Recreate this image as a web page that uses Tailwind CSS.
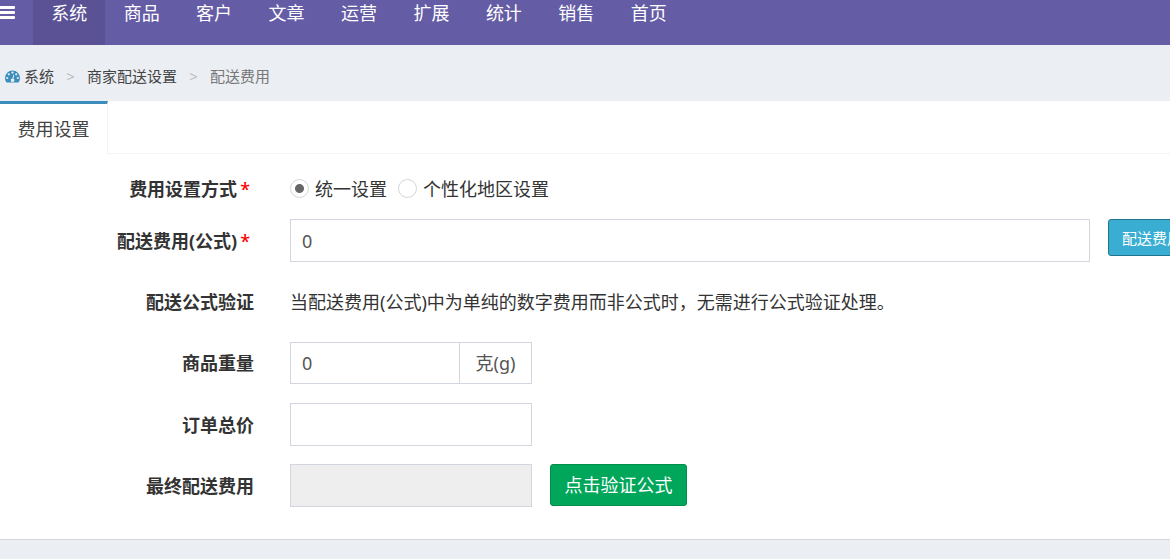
<!DOCTYPE html>
<html lang="zh-CN">
<head>
<meta charset="utf-8">
<meta name="viewport" content="width=device-width, initial-scale=1">
<title>配送费用</title>
<script src="https://cdn.jsdelivr.net/npm/@tailwindcss/browser@4"></script>
</head>
<body class="min-h-screen overflow-x-hidden bg-[#ebeef3] font-['Noto_Sans','Noto_Sans_CJK_SC',sans-serif] text-lg leading-6 text-[#333]">
<header class="flex h-[45px] items-stretch bg-[#655ca6] text-white">
  <button type="button" aria-label="菜单" class="flex w-[33px] shrink-0 items-start pt-1.5">
    <svg class="h-[13px] w-[15px]" viewBox="0 0 15 13" fill="currentColor" aria-hidden="true"><path d="M0 0h14q1 0 1 1v1q0 1-1 1H0zM0 5h14q1 0 1 1v1q0 1-1 1H0zM0 10h14q1 0 1 1v1q0 1-1 1H0z"/></svg>
  </button>
  <nav class="grid w-[652px] grid-cols-9 text-center">
    <a href="#" class="bg-[#5a5295] pt-px">系统</a>
    <a href="#" class="pt-px">商品</a>
    <a href="#" class="pt-px">客户</a>
    <a href="#" class="pt-px">文章</a>
    <a href="#" class="pt-px">运营</a>
    <a href="#" class="pt-px">扩展</a>
    <a href="#" class="pt-px">统计</a>
    <a href="#" class="pt-px">销售</a>
    <a href="#" class="pt-px">首页</a>
  </nav>
</header>

<nav aria-label="位置" class="flex h-14 items-center pt-1.5 pl-[5px] text-[15px] text-[#444]">
  <a href="#" class="flex items-center gap-1">
    <svg class="h-[13px] w-[15px]" viewBox="0 0 15 13" aria-hidden="true">
      <path fill="#3c8dbc" d="M7.5 .5A7.5 7.5 0 0 0 0 8c0 1.500.4 2.800 1.100 4 .2.300.4.500.8.500h11.200c.4 0 .6-.2.8-.5.7-1.200 1.100-2.500 1.100-4A7.500 7.500 0 0 0 7.500.5z"/>
      <g fill="#ebeef3"><circle cx="2.200" cy="8" r="1.100"/><circle cx="3.800" cy="4.300" r="1.100"/><circle cx="7.500" cy="2.700" r="1.100"/><circle cx="11.200" cy="4.300" r="1.100"/><circle cx="12.800" cy="8" r="1.100"/><path d="M8.400 4.800l.9.300-.9 3.600a1.700 1.700 0 1 1-1-.2z"/></g>
    </svg>
    <span>系统</span>
  </a>
  <span class="w-[33px] text-center text-[#bbb]">&gt;</span>
  <a href="#">商家配送设置</a>
  <span class="w-[33px] text-center text-[#bbb]">&gt;</span>
  <span class="text-[#777]">配送费用</span>
</nav>

<main class="border-b border-[#d3d8de] bg-white">
  <div class="flex h-[53px] border-b border-[#f4f4f4]">
    <a href="#" class="-mb-px w-[108px] border-t-[3px] border-r border-t-[#3c8dbc] border-r-[#f4f4f4] bg-white pt-[13px] text-center text-[#444]">费用设置</a>
  </div>
  <form class="flex flex-col gap-[18px] pt-[22px] pb-8">
    <div class="flex h-[25px] items-center gap-9" role="radiogroup" aria-labelledby="mode">
      <div id="mode" class="w-[254px] shrink-0 pr-1 text-right font-bold">费用设置方式<span class="pl-[3px] font-medium text-[#f00]">*</span></div>
      <div class="flex items-center gap-[11px]">
        <label class="flex items-center gap-1.5"><input type="radio" name="mode" checked class="size-[19px] appearance-none rounded-full border border-[#d5d5d5] bg-white checked:bg-[radial-gradient(circle,#666_4px,#fff_5px)]">统一设置</label>
        <label class="flex items-center gap-1.5"><input type="radio" name="mode" class="size-[19px] appearance-none rounded-full border border-[#d5d5d5] bg-white checked:bg-[radial-gradient(circle,#666_4px,#fff_5px)]">个性化地区设置</label>
      </div>
    </div>
    <div class="flex items-start gap-9">
      <label for="fee" class="w-[254px] shrink-0 pt-2.5 pr-1 text-right font-bold">配送费用(公式)<span class="pl-[3px] font-medium text-[#f00]">*</span></label>
      <div class="flex min-w-0 flex-1 items-start gap-[18px]">
        <input id="fee" type="text" value="0" class="h-[43px] min-w-0 flex-1 border border-[#d2d6de] bg-white px-[11px] text-[#555]">
        <div class="w-[62px] shrink-0 overflow-hidden">
          <button type="button" class="h-[37px] rounded-[3px] border border-[#23738c] bg-[#3aaed2] px-[13px] text-[15px] whitespace-nowrap text-white">配送费用</button>
        </div>
      </div>
    </div>
    <div class="flex h-[43px] items-center gap-9">
      <div class="w-[254px] shrink-0 text-right font-bold">配送公式验证</div>
      <p>当配送费用(公式)中为单纯的数字费用而非公式时，无需进行公式验证处理。</p>
    </div>
    <div class="flex h-11 items-center gap-9">
      <label for="weight" class="w-[254px] shrink-0 text-right font-bold">商品重量</label>
      <div class="flex h-[42px] w-[242px] border border-[#d2d6de] text-[#555]">
        <input id="weight" type="text" value="0" class="min-w-0 flex-1 bg-white px-[11px]">
        <span class="flex w-[72px] items-center justify-center border-l border-[#d2d6de]">克(g)</span>
      </div>
    </div>
    <div class="flex items-center gap-9">
      <label for="total" class="w-[254px] shrink-0 text-right font-bold">订单总价</label>
      <input id="total" type="text" class="h-[43px] w-[242px] border border-[#d2d6de] bg-white px-[11px] text-[#555]">
    </div>
    <div class="flex items-center gap-9">
      <label for="final" class="w-[254px] shrink-0 text-right font-bold">最终配送费用</label>
      <div class="flex items-start gap-[18px]">
        <input id="final" type="text" readonly class="h-[43px] w-[242px] border border-[#d2d6de] bg-[#eee] px-[11px] text-[#555]">
        <button type="button" class="h-[42px] w-[137px] rounded-[3px] border border-[#008d4c] bg-[#00a65a] text-white">点击验证公式</button>
      </div>
    </div>
  </form>
</main>
</body>
</html>
